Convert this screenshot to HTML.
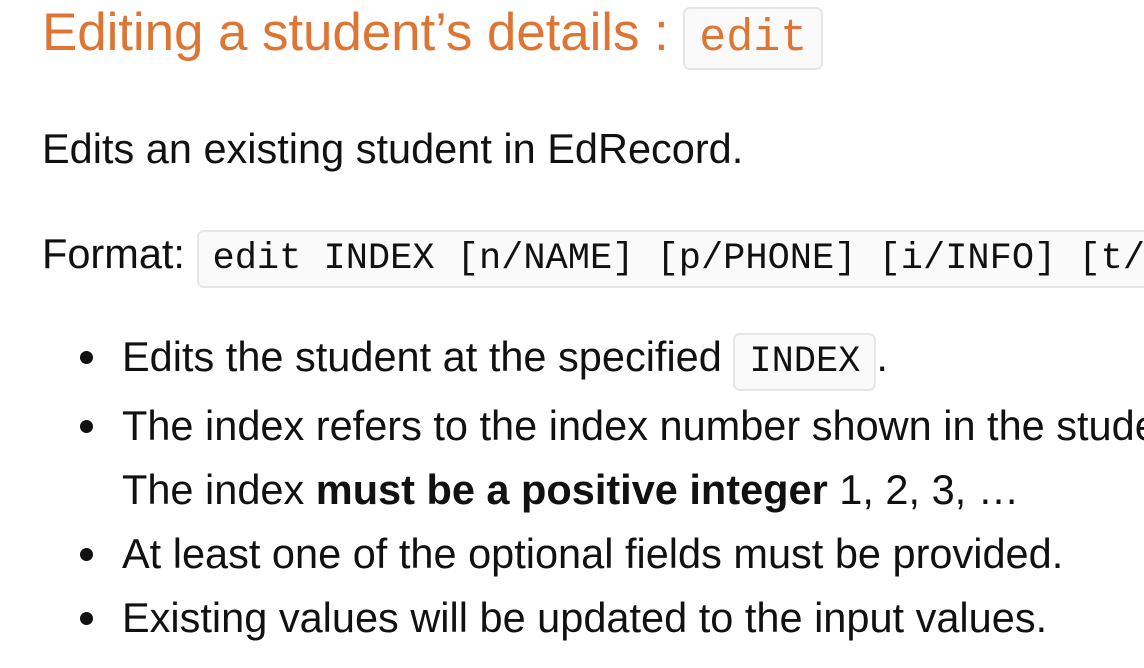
<!DOCTYPE html>
<html><head><style>
html,body{margin:0;padding:0;background:#fff;width:1144px;height:668px;overflow:hidden}
body{font-family:"Liberation Sans",sans-serif;color:#111;position:relative}
.a{position:absolute;white-space:nowrap}
h1{position:absolute;left:42px;top:-5px;margin:0;font-weight:normal;color:#dd7634;font-size:53px;letter-spacing:-0.1px;line-height:76px;white-space:nowrap}
code{font-family:"Liberation Mono",monospace;background:#fafafa;border:2px solid #e6e6e6;border-radius:7px}
h1 code{font-size:45px;letter-spacing:0;padding:4px 14px;color:#dd7634}
.t{font-size:41.5px;letter-spacing:0;line-height:64px;white-space:nowrap}
.t code{font-size:37px;letter-spacing:0;padding:6px 14px;color:#111}
ul{position:absolute;left:0;top:325px;margin:0;padding-left:122px;list-style:none}
li{position:relative}
li::before{content:"";position:absolute;left:-42px;top:26px;width:13px;height:13px;border-radius:50%;background:#111}
</style></head><body>
<h1>Editing a student’s details : <code>edit</code></h1>
<div class="a t" style="left:42px;top:117px">Edits an existing student in EdRecord.</div>
<div class="a t" style="left:42px;top:222px">Format: <code>edit INDEX [n/NAME] [p/PHONE] [i/INFO] [t/TAG]…</code></div>
<ul class="t">
<li>Edits the student at the specified <code>INDEX</code>.</li>
<li>The index refers to the index number shown in the student list.<br>The index <b>must be a positive integer</b> 1, 2, 3, …</li>
<li>At least one of the optional fields must be provided.</li>
<li>Existing values will be updated to the input values.</li>
</ul>
</body></html>
